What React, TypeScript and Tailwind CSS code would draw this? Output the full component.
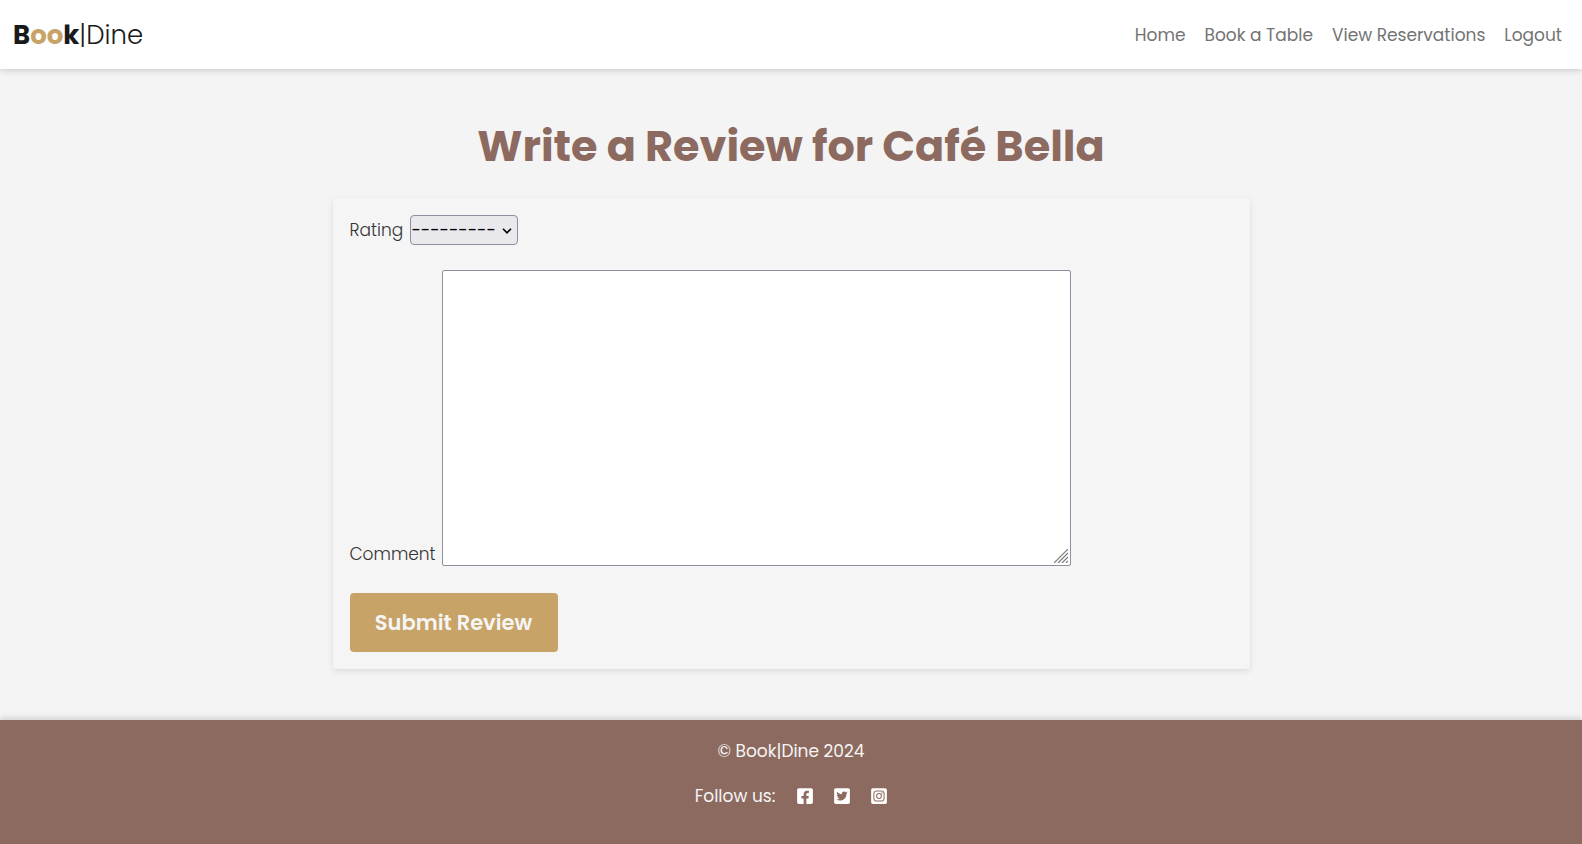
import { FaFacebookSquare, FaInstagramSquare, FaTwitterSquare } from "react-icons/fa";

const navLinks = ["Home", "Book a Table", "View Reservations", "Logout"];

const socials = [
  { name: "Facebook", Icon: FaFacebookSquare },
  { name: "Twitter", Icon: FaTwitterSquare },
  { name: "Instagram", Icon: FaInstagramSquare },
];

function Header() {
  return (
    <header className="relative flex items-center justify-between bg-white pt-[13px] pr-5 pb-[11px] pl-[13px] shadow-[0_2px_6px_rgba(0,0,0,0.15)]">
      <a href="#" className="text-[26px] leading-[45px] font-light text-[#1a1a1a]">
        <span className="font-bold">
          B<span className="text-[#c8a367]">oo</span>k
        </span>
        |Dine
      </a>
      <nav className="flex gap-[19px] pb-px text-[17px] text-[#737373]">
        {navLinks.map((label) => (
          <a key={label} href="#">
            {label}
          </a>
        ))}
      </nav>
    </header>
  );
}

function ReviewForm() {
  return (
    <form
      onSubmit={(event) => event.preventDefault()}
      className="w-11/12 max-w-[917px] rounded bg-[#f5f5f5] p-[17px] shadow-[0_2px_6px_rgba(0,0,0,0.1)]"
    >
      <div className="flex items-center gap-1">
        <label htmlFor="rating" className="w-14 font-light">
          Rating
        </label>
        <div className="relative">
          <select
            id="rating"
            className="block h-[30px] w-[108px] appearance-none rounded border border-[#8f8f9d] bg-[#e9e9ed] pl-px text-[17px] text-black"
          >
            <option value="">---------</option>
            <option>1</option>
            <option>2</option>
            <option>3</option>
            <option>4</option>
            <option>5</option>
          </select>
          <svg
            viewBox="0 0 10 6"
            className="pointer-events-none absolute top-[13px] right-[6px] h-[6px] w-[10px] fill-none stroke-black stroke-[1.6]"
          >
            <path d="M1 .7 5 4.8 9 .7" />
          </svg>
        </div>
      </div>
      <div className="mt-[25px] flex items-end gap-1">
        <label htmlFor="comment" className="w-[88px] leading-6 font-light">
          Comment
        </label>
        <div className="relative min-w-0">
          <textarea
            id="comment"
            className="block h-[296px] w-[629px] max-w-full resize-none rounded-xs border border-[#8f8f9d] bg-white p-1"
          />
          <svg
            viewBox="0 0 14 14"
            className="pointer-events-none absolute right-[3px] bottom-[3px] size-[14px] stroke-[#777] stroke-[1.2]"
          >
            <path d="M0 14 14 0M4 14 14 4M8 14l6-6M12 14l2-2" />
          </svg>
        </div>
      </div>
      <button
        type="submit"
        className="mt-[27px] block h-[59px] w-52 rounded bg-[#c8a367] text-[21px] font-semibold text-[#f5f5f5]"
      >
        Submit Review
      </button>
    </form>
  );
}

function Footer() {
  return (
    <footer className="relative flex grow flex-col items-center gap-[19px] bg-[#8c6a5f] pt-[18px] text-[17px] leading-[26px] text-[#f5f5f5] shadow-[0_-2px_6px_rgba(0,0,0,0.15)]">
      <p>© Book|Dine 2024</p>
      <div className="flex items-center">
        <p>Follow us:</p>
        <ul className="ml-[22px] flex gap-[21px]">
          {socials.map(({ name, Icon }) => (
            <li key={name}>
              <a href="#" aria-label={name} className="block pb-px text-white">
                <Icon className="h-[18px] w-4" />
              </a>
            </li>
          ))}
        </ul>
      </div>
    </footer>
  );
}

export default function App() {
  return (
    <div className="flex min-h-screen flex-col bg-[#f4f4f4] font-[Poppins,Inter,sans-serif] text-[17px] leading-[26px] text-[#333]">
      <Header />
      <main className="flex flex-col items-center pt-[51px] pb-[51px]">
        <h1 className="mb-[25px] text-center text-[43px] leading-[53px] font-bold text-[#8c6a5f]">
          Write a Review for Café Bella
        </h1>
        <ReviewForm />
      </main>
      <Footer />
    </div>
  );
}
